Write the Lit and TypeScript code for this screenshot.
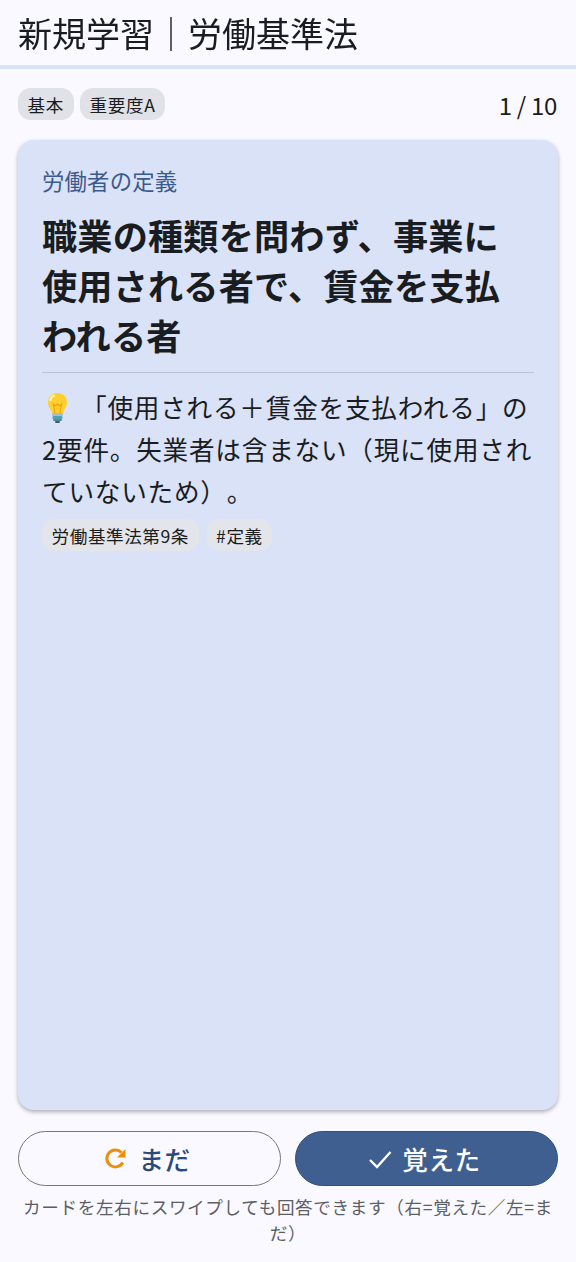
import { LitElement, html, css } from "lit";
import { customElement } from "lit/decorators.js";

@customElement("app-root")
export class AppRoot extends LitElement {
  static styles = css`
    :host {
      display: flex;
      flex-direction: column;
      height: 1262px;
      background: #f9f9ff;
      color: #191c20;
      font-family: "Noto Sans CJK JP", "Noto Sans", sans-serif;
      box-sizing: border-box;
      text-spacing-trim: space-all;
    }
    .header {
      height: 65px;
      box-sizing: border-box;
      padding: 0 18px;
      display: flex;
      align-items: center;
      font-size: 34px;
      line-height: 1;
      white-space: nowrap;
      will-change: transform;
    }
    .rule { height: 4px; background: #dae2f7; }
    .meta {
      display: flex;
      align-items: center;
      justify-content: space-between;
      padding: 19px 18px 20px;
      height: 32px;
    }
    .chips { display: flex; gap: 6.4px; }
    .chip {
      height: 32px;
      box-sizing: border-box;
      padding: 0 9.6px;
      display: flex;
      align-items: center;
      border-radius: 12.8px;
      background: #e1e2e8;
      font-size: 17.6px;
      letter-spacing: 0.6px;
      color: #191c20;
      white-space: nowrap;
    }
    .count { font-size: 24px; letter-spacing: -0.3px; margin-right: 1px; }
    .card {
      flex: 1;
      margin: 0 18px;
      background: #dae2f7;
      border-radius: 16px;
      padding: 23px 24px 24px;
      box-shadow: 0 2px 4px rgba(0, 0, 0, 0.3);
      display: flex;
      flex-direction: column;
    }
    .label { font-size: 22.4px; letter-spacing: 0.16px; line-height: 34px; color: #3a5a8c; }
    .q {
      margin-top: 13px;
      font-size: 35.2px;
      letter-spacing: 0.15px;
      line-height: 50px;
      font-weight: 700;
    }
    .divider { height: 1px; background: #b9c3d3; margin: 12px 0 13px; }
    .a { font-size: 25.6px; letter-spacing: 0.8px; line-height: 42px; }
    .bulb { display: inline-block; width: 30px; height: 34px; vertical-align: -7px; margin-right: 9px; }
    .tags { display: flex; gap: 8px; margin-top: 7px; }
    .tags .chip { background: #e4e5ea; letter-spacing: 0.55px; }
    .actions {
      display: grid;
      grid-template-columns: 1fr 1fr;
      gap: 14px;
      padding: 21px 18px 0;
    }
    .btn {
      height: 55px;
      box-sizing: border-box;
      border-radius: 28px;
      padding-right: 4px;
      display: flex;
      align-items: center;
      justify-content: center;
      gap: 10px;
      font-size: 25.6px;
      letter-spacing: 0.5px;
      font-weight: 500;
    }
    .later { border: 1.5px solid #74777f; background: #f9f9ff; color: #2a4a7c; }
    .done { background: #3f5f90; color: #fff; border: 1px solid #2f4f80; }
    .hint {
      padding: 8px 18px 16px;
      text-align: center;
      font-size: 17.6px;
      letter-spacing: 0.64px;
      line-height: 26px;
      color: #5c5f66;
    }
  `;

  render() {
    return html`
      <div class="header">新規学習｜労働基準法</div>
      <div class="rule"></div>
      <div class="meta">
        <div class="chips">
          <span class="chip">基本</span>
          <span class="chip">重要度A</span>
        </div>
        <span class="count">1 / 10</span>
      </div>
      <div class="card">
        <div class="label">労働者の定義</div>
        <div class="q">職業の種類を問わず、事業に使用される者で、賃金を支払われる者</div>
        <div class="divider"></div>
        <div class="a">
          <svg class="bulb" viewBox="0 0 30 34">
            <path d="M15.500 2C10 2 6 6 6 11.500c0 4 2.500 6 4 10.500h11c1.500-4.500 4-6.500 4-10.500C25 6 21 2 15.500 2z" fill="#fdd02f" />
            <path d="M8.500 10c0-3 2-5 4.500-5.500" stroke="#fff3a8" stroke-width="2.200" fill="none" />
            <path d="M13 22l-1.800-9 2.200 1.800 2-1.800 2 1.800 2.200-1.800-1.800 9" stroke="#f0a000" stroke-width="1.100" fill="none" />
            <rect x="10" y="22" width="11" height="3" rx="1" fill="#a9bcc4" />
            <rect x="10.500" y="25" width="10" height="3" rx="1" fill="#4fa3b8" />
            <rect x="11" y="28" width="9" height="2" rx="1" fill="#5f8796" />
            <rect x="13" y="30" width="5" height="2" rx="1" fill="#455a64" />
          </svg>「使用される＋賃金を支払われる」の2要件。失業者は含まない（現に使用されていないため）。
        </div>
        <div class="tags">
          <span class="chip">労働基準法第9条</span>
          <span class="chip">#定義</span>
        </div>
      </div>
      <div class="actions">
        <div class="btn later">
          <svg width="24" height="24" viewBox="0 0 24 24">
            <path d="M18.800 15.500A8.500 8.500 0 1 1 17.500 5.500" fill="none" stroke="#ea8f0c" stroke-width="3" />
            <path d="M21.500 2v8.500H13z" fill="#ea8f0c" />
          </svg>
          <span>まだ</span>
        </div>
        <div class="btn done">
          <svg width="24" height="24" viewBox="0 0 24 24">
            <path d="M2 13l7 7L22.500 5" fill="none" stroke="#fff" stroke-width="2.400" />
          </svg>
          <span>覚えた</span>
        </div>
      </div>
      <div class="hint">カードを左右にスワイプしても回答できます（右=覚えた／左=まだ）</div>
    `;
  }
}
